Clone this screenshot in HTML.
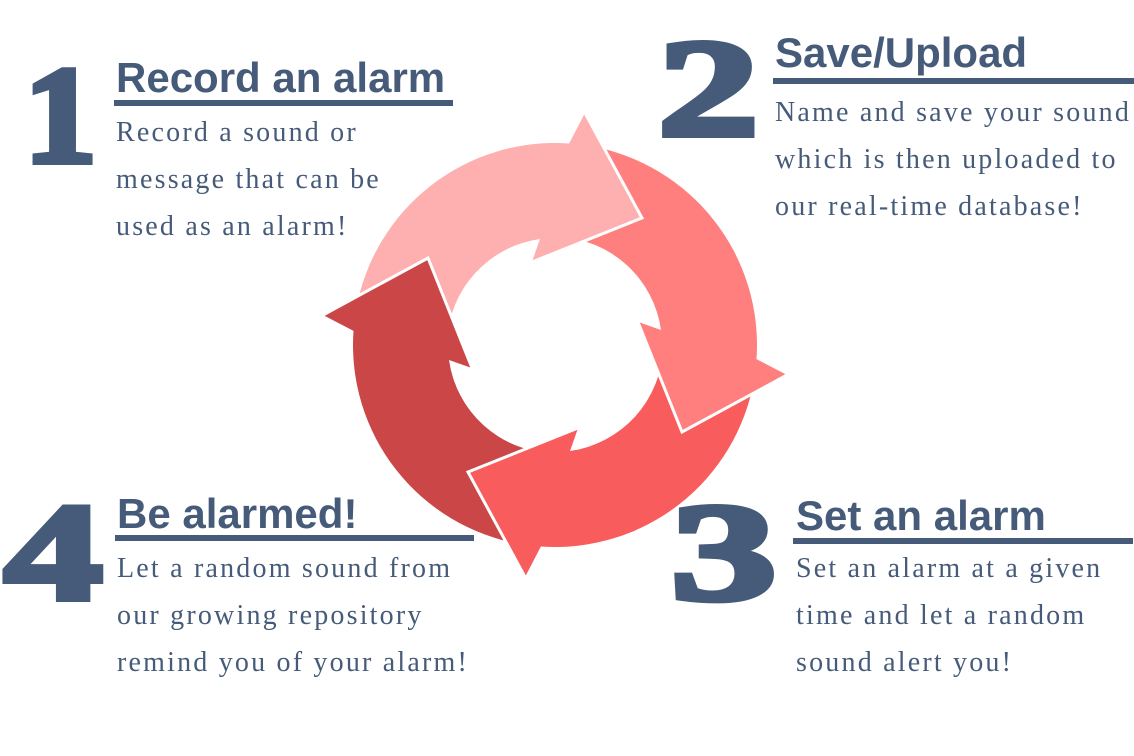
<!DOCTYPE html>
<html><head><meta charset="utf-8"><style>
html,body{margin:0;padding:0;background:#fff;}
body{width:1134px;height:756px;position:relative;overflow:hidden;color:#465b79;}
.d{position:absolute;font-family:"Liberation Serif",serif;font-weight:bold;font-size:139px;line-height:139px;-webkit-text-stroke:6px #465b79;transform-origin:0 0;}
.h{position:absolute;font-family:"Liberation Sans",sans-serif;font-weight:bold;font-size:42px;line-height:42px;white-space:nowrap;}
.u{position:absolute;background:#465b79;height:6px;}
.b{position:absolute;font-family:"Liberation Serif",serif;font-size:28px;line-height:47px;letter-spacing:2.2px;white-space:nowrap;}
svg{position:absolute;left:0;top:0;}
</style></head><body>
<svg width="1134" height="756" viewBox="0 0 1134 756">
<defs>
<path id="body" d="M-199,-35 A202,202 0 0 1 14.1,-201.5 L30,-232 L87,-127 L-23,-83 L-15,-106 A108,108 0 0 0 -108,-3.8 Z"/>
<path id="head" d="M30,-232 L87,-127 L-23,-83 Z"/>
<path id="edge" d="M30,-232 L87,-127 L-23,-83"/>
</defs>
<g transform="translate(555,345)">
<use href="#body" fill="#feb0b0"/>
<use href="#body" fill="#ff7f7e" transform="rotate(90)"/>
<use href="#body" fill="#f85c5c" transform="rotate(180)"/>
<use href="#body" fill="#cb4646" transform="rotate(270)"/>
<g fill="#feb0b0"><use href="#head"/><use href="#edge" fill="none" stroke="#fff" stroke-width="3"/></g>
<g fill="#ff7f7e" transform="rotate(90)"><use href="#head"/><use href="#edge" fill="none" stroke="#fff" stroke-width="3"/></g>
<g fill="#f85c5c" transform="rotate(180)"><use href="#head"/><use href="#edge" fill="none" stroke="#fff" stroke-width="3"/></g>
<g fill="#cb4646" transform="rotate(270)"><use href="#head"/><use href="#edge" fill="none" stroke="#fff" stroke-width="3"/></g>
</g>
</svg>

<div class="d" style="left:24px;top:47px;transform:scaleX(1.05)">1</div>
<div class="h" style="left:116px;top:57px">Record an alarm</div>
<div class="u" style="left:114px;top:100px;width:339px"></div>
<div class="b" style="left:116px;top:109px">Record a sound or<br>message that can be<br>used as an alarm!</div>

<div class="d" style="left:658px;top:20px;transform:scaleX(1.45)">2</div>
<div class="h" style="left:775px;top:32px">Save/Upload</div>
<div class="u" style="left:773px;top:78px;width:361px"></div>
<div class="b" style="left:775px;top:89px">Name and save your sound<br>which is then uploaded to<br>our real-time database!</div>

<div class="d" style="left:671px;top:484px;transform:scaleX(1.52)">3</div>
<div class="h" style="left:796px;top:495px">Set an alarm</div>
<div class="u" style="left:793px;top:538px;width:340px"></div>
<div class="b" style="left:796px;top:545px">Set an alarm at a given<br>time and let a random<br>sound alert you!</div>

<div class="d" style="left:4px;top:484px;transform:scaleX(1.42)">4</div>
<div class="h" style="left:117px;top:493px">Be alarmed!</div>
<div class="u" style="left:115px;top:535px;width:359px"></div>
<div class="b" style="left:117px;top:545px">Let a random sound from<br>our growing repository<br>remind you of your alarm!</div>
</body></html>
